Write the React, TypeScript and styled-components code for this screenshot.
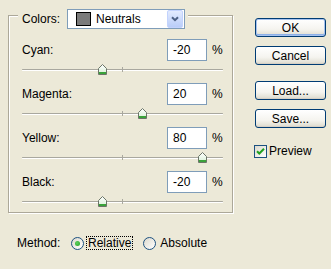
import React from "react";
import styled, { createGlobalStyle } from "styled-components";

const Global = createGlobalStyle`
  html, body { margin: 0; padding: 0; background: #ECE9D8; }
  body { font-family: "Liberation Sans", Arial, sans-serif; font-size: 12px; color: #000; }
  * { box-sizing: border-box; }
`;

const Dialog = styled.div`
  display: flex;
  align-items: flex-start;
  width: 331px;
  height: 269px;
  padding: 15px 0 0 8px;
`;

const LeftCol = styled.div`
  display: flex;
  flex-direction: column;
  width: 226px;
`;

const GroupBox = styled.div`
  width: 225px;
  height: 198px;
  border: 1px solid #aca899;
  box-shadow: inset 1px 1px 0 #fff, 1px 1px 0 #fff;
  padding: 0 0 0 13px;
  display: flex;
  flex-direction: column;
`;

const Legend = styled.div`
  display: flex;
  align-items: center;
  width: fit-content;
  height: 20px;
  margin: -7px 0 0 -4px;
  padding: 0 3px 0 4px;
  background: #ece9d8;
`;

const LegendLabel = styled.span`
  width: 45px;
`;

const Combo = styled.div`
  display: flex;
  align-items: center;
  width: 118px;
  height: 20px;
  border: 1px solid #7f9db9;
  background: #fff;
  padding: 0 1px 0 8px;
`;

const Swatch = styled.span<{ $color: string }>`
  width: 15px;
  height: 14px;
  border: 1px solid #000;
  background: ${(p) => p.$color};
`;

const ComboText = styled.span`
  margin-left: 5px;
  flex: 1;
`;

const ComboArrow = styled.span`
  display: flex;
  align-items: center;
  justify-content: center;
  width: 16px;
  height: 18px;
  border: 1px solid #c3d3fd;
  border-radius: 2px;
  background: linear-gradient(#e3ebfe, #b9cdf9);
`;

const Rows = styled.div`
  display: flex;
  flex-direction: column;
  gap: 7px;
  margin-top: 10px;
  width: 201px;
`;

const Row = styled.div`
  display: flex;
  flex-direction: column;
  gap: 2px;
`;

const RowHead = styled.div`
  display: flex;
  align-items: center;
  height: 22px;
`;

const RowLabel = styled.span`
  flex: 1;
`;

const NumInput = styled.div`
  width: 40px;
  height: 22px;
  border: 1px solid #7f9db9;
  background: #fff;
  padding-left: 5px;
  display: flex;
  align-items: center;
`;

const Percent = styled.span`
  margin-left: 5px;
  width: 11px;
`;

const Slider = styled.div`
  position: relative;
  height: 13px;
  &::before {
    content: "";
    position: absolute;
    left: 0;
    right: 0;
    top: 6px;
    height: 1px;
    background: #a9a89f;
    border-radius: 1px;
    box-shadow: 0 1px 0 #fff;
  }
  &::after {
    content: "";
    position: absolute;
    left: 100px;
    top: 4px;
    width: 1px;
    height: 5px;
    background: #a9a89f;
  }
`;

const ThumbSvg = styled.svg`
  position: absolute;
  top: 1px;
  z-index: 1;
`;

const MethodRow = styled.div`
  display: flex;
  align-items: center;
  height: 14px;
  margin-top: 23px;
  padding-left: 9px;
`;

const MethodLabel = styled.span`
  width: 54px;
`;

const Radio = styled.span<{ $checked?: boolean; $gap?: number }>`
  position: relative;
  width: 13px;
  height: 13px;
  border-radius: 50%;
  border: 1px solid #1c5180;
  background: linear-gradient(135deg, #dcd9cd, #ffffff);
  margin-left: ${(p) => p.$gap ?? 0}px;
  &::after {
    content: "";
    display: ${(p) => (p.$checked ? "block" : "none")};
    position: absolute;
    left: 3px;
    top: 3px;
    width: 5px;
    height: 5px;
    border-radius: 50%;
    background: radial-gradient(circle at 40% 40%, #5ecf5e, #21a121);
  }
`;

const RadioText = styled.span<{ $focus?: boolean }>`
  margin-left: ${(p) => (p.$focus ? 2 : 2)}px;
  padding: 0 1px;
  line-height: 12px;
  border: 1px dotted ${(p) => (p.$focus ? "#000" : "transparent")};
`;

const RightCol = styled.div`
  display: flex;
  flex-direction: column;
  margin: 3px 0 0 21px;
`;

const Button = styled.button<{ $default?: boolean; $gapTop?: number }>`
  width: 71px;
  height: 19px;
  margin: ${(p) => p.$gapTop ?? 0}px 0 0 0;
  padding: 0;
  font-family: "Liberation Sans", Arial, sans-serif;
  font-size: 12px;
  color: #000;
  border: 1px solid #003c74;
  border-radius: 3px;
  background: linear-gradient(#ffffff, #f5f4ef 60%, #e3e1d6 90%, #d6d0c5);
  box-shadow: ${(p) =>
    p.$default
      ? "inset 0 0 0 1px #a6c2ef, inset 0 -1px 0 1px #8cb0e8"
      : "inset 0 -1px 0 #d6d0c5"};
`;

const CheckRow = styled.label`
  display: flex;
  align-items: center;
  margin: 16px 0 0 -1px;
`;

const CheckBox = styled.span`
  display: flex;
  align-items: center;
  justify-content: center;
  width: 13px;
  height: 13px;
  border: 1px solid #1c5180;
  background: linear-gradient(135deg, #dcd9cd, #ffffff);
`;

const CheckText = styled.span`
  margin-left: 2px;
`;

function Thumb({ value }: { value: number }) {
  const left = 100 + value - 4;
  return (
    <ThumbSvg width="9" height="11" viewBox="0 0 9 11" style={{ left }}>
      <defs>
        <linearGradient id="tg" x1="0" y1="0" x2="0" y2="1">
          <stop offset="0" stopColor="#ffffff" />
          <stop offset="1" stopColor="#d7efd5" />
        </linearGradient>
      </defs>
      <path d="M4.5 0.5 L8.5 4.5 V10.5 H0.5 V4.5 Z" fill="url(#tg)" stroke="#6b7568" />
      <rect x="1" y="8" width="7" height="2" fill="#3aa23a" />
    </ThumbSvg>
  );
}

const rows = [
  { name: "Cyan:", value: -20 },
  { name: "Magenta:", value: 20 },
  { name: "Yellow:", value: 80 },
  { name: "Black:", value: -20 },
];

export default function App() {
  return (
    <>
      <Global />
      <Dialog>
        <LeftCol>
          <GroupBox>
            <Legend>
              <LegendLabel>Colors:</LegendLabel>
              <Combo>
                <Swatch $color="#7b7b7b" />
                <ComboText>Neutrals</ComboText>
                <ComboArrow>
                  <svg width="8" height="6" viewBox="0 0 8 6">
                    <path d="M1 1.2 L4 4.2 L7 1.2" fill="none" stroke="#4d6185" strokeWidth="2" />
                  </svg>
                </ComboArrow>
              </Combo>
            </Legend>
            <Rows>
              {rows.map((r) => (
                <Row key={r.name}>
                  <RowHead>
                    <RowLabel>{r.name}</RowLabel>
                    <NumInput>{r.value}</NumInput>
                    <Percent>%</Percent>
                  </RowHead>
                  <Slider>
                    <Thumb value={r.value} />
                  </Slider>
                </Row>
              ))}
            </Rows>
          </GroupBox>
          <MethodRow>
            <MethodLabel>Method:</MethodLabel>
            <Radio $checked />
            <RadioText $focus>Relative</RadioText>
            <Radio $gap={10} />
            <RadioText>Absolute</RadioText>
          </MethodRow>
        </LeftCol>
        <RightCol>
          <Button $default>OK</Button>
          <Button $gapTop={9}>Cancel</Button>
          <Button $gapTop={16}>Load...</Button>
          <Button $gapTop={9}>Save...</Button>
          <CheckRow>
            <CheckBox>
              <svg width="9" height="9" viewBox="0 0 9 9">
                <path d="M1 4.2 L3.3 6.5 L8 1.8" fill="none" stroke="#21a121" strokeWidth="2" />
              </svg>
            </CheckBox>
            <CheckText>Preview</CheckText>
          </CheckRow>
        </RightCol>
      </Dialog>
    </>
  );
}
